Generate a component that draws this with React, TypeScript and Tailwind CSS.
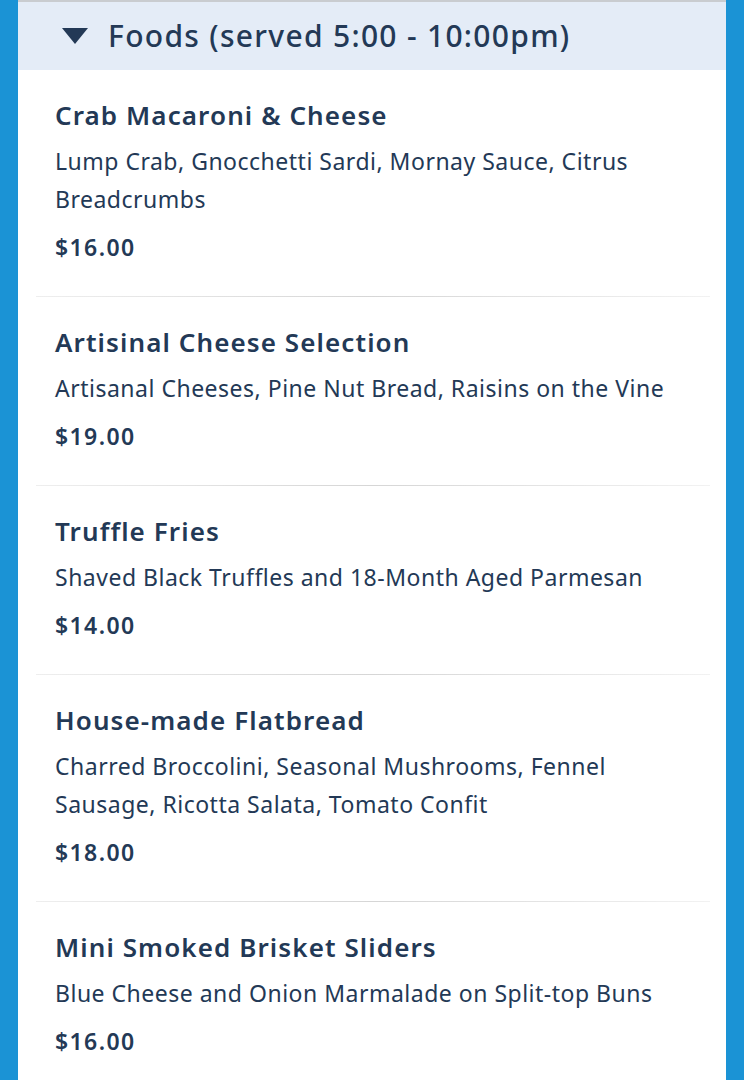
const items = [
  {
    name: "Crab Macaroni & Cheese",
    desc: "Lump Crab, Gnocchetti Sardi, Mornay Sauce, Citrus Breadcrumbs",
    price: "$16.00",
  },
  {
    name: "Artisinal Cheese Selection",
    desc: "Artisanal Cheeses, Pine Nut Bread, Raisins on the Vine",
    price: "$19.00",
  },
  {
    name: "Truffle Fries",
    desc: "Shaved Black Truffles and 18-Month Aged Parmesan",
    price: "$14.00",
  },
  {
    name: "House-made Flatbread",
    desc: "Charred Broccolini, Seasonal Mushrooms, Fennel Sausage, Ricotta Salata, Tomato Confit",
    price: "$18.00",
  },
  {
    name: "Mini Smoked Brisket Sliders",
    desc: "Blue Cheese and Onion Marmalade on Split-top Buns",
    price: "$16.00",
  },
];

export default function App() {
  return (
    <div
      className="w-[744px] h-[1080px] overflow-hidden bg-[#1b93d5] px-[18px] text-[#233956]"
      style={{ fontFamily: "'Noto Sans', Lato, sans-serif" }}
    >
      <div className="bg-white h-full border-t-2 border-[#c9ccd0]">
        {/* Section header */}
        <div className="h-[68px] bg-[#e4ecf7] flex items-center pl-[44px]">
          <svg width="26" height="16" viewBox="0 0 26 16" className="shrink-0">
            <polygon points="0,0 26,0 13,16" fill="#233956" />
          </svg>
          <h2 className="ml-[20px] text-[30px] leading-[40px] font-medium tracking-[1.3px]">
            Foods (served 5:00 - 10:00pm)
          </h2>
        </div>

        {items.map((item, i) => (
          <div key={i}>
            {i > 0 && (
              <div className="ml-[18px] mr-[16px] h-px bg-gradient-to-r from-[#eeeeee] via-[#d6d6d6] to-[#f2f2f2]" />
            )}
            <div className="pl-[37px] pr-[40px] pt-[27px] pb-[33px]">
              <h3 className="text-[26px] leading-[36px] font-semibold tracking-[1.1px]">{item.name}</h3>
              <p className="mt-[9px] text-[23px] leading-[38px] tracking-[0.5px]">{item.desc}</p>
              <p className="mt-[13px] text-[23px] leading-[32px] font-semibold tracking-[1.4px]">{item.price}</p>
            </div>
          </div>
        ))}
      </div>
    </div>
  );
}
